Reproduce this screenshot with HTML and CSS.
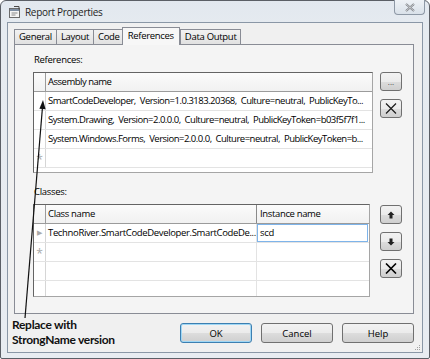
FILE: index.html
```html
<!DOCTYPE html>
<html lang="en">
<head>
    <meta charset="UTF-8">
    <title>Report Properties</title>
    <link rel="stylesheet" href="styles.css">
</head>
<body>
<div class="window">
    <div class="titlebar">
        <svg class="app-icon" width="13" height="12" viewBox="0 0 13 12">
            <rect x="1.5" y="2.5" width="10" height="9" fill="#f4f4f4" stroke="#6b6b6b"/>
            <rect x="2" y="3" width="9" height="2" fill="#7d8ea3"/>
            <path d="M3.5 7h6M3.5 9h4" stroke="#8a8a8a"/>
            <path d="M6 0.5l5 0 0 3" stroke="#4a4a4a" fill="none"/>
        </svg>
        <span class="title">Report Properties</span>
        <button class="close-btn">
            <svg width="10" height="9" viewBox="0 0 10 9">
                <path d="M1 1l8 7M9 1l-8 7" stroke="#7b7f85" stroke-width="2"/>
                <path d="M1 1l8 7M9 1l-8 7" stroke="#fff" stroke-width="0.6"/>
            </svg>
        </button>
    </div>

    <div class="client">
        <div class="tabs">
            <span class="tab">General</span>
            <span class="tab">Layout</span>
            <span class="tab">Code</span>
            <span class="tab active">References</span>
            <span class="tab">Data Output</span>
        </div>

        <div class="panel">
            <div class="group">
                <div class="group-label">References:</div>
                <div class="group-body">
                    <div class="grid refs-grid">
                        <div class="grid-row head">
                            <span class="rowhead"></span>
                            <span class="cell">Assembly name</span>
                        </div>
                        <div class="grid-row">
                            <span class="rowhead"></span>
                            <span class="cell">SmartCodeDeveloper,&nbsp; Version=1.0.3183.20368,&nbsp; Culture=neutral,&nbsp; PublicKeyTo...</span>
                        </div>
                        <div class="grid-row">
                            <span class="rowhead"></span>
                            <span class="cell">System.Drawing,&nbsp; Version=2.0.0.0,&nbsp; Culture=neutral,&nbsp; PublicKeyToken=b03f5f7f1...</span>
                        </div>
                        <div class="grid-row">
                            <span class="rowhead"></span>
                            <span class="cell">System.Windows.Forms,&nbsp; Version=2.0.0.0,&nbsp; Culture=neutral,&nbsp; PublicKeyToken=b...</span>
                        </div>
                        <div class="grid-row">
                            <span class="rowhead new-row">*</span>
                            <span class="cell"></span>
                        </div>
                    </div>
                    <div class="side-buttons">
                        <button class="btn small-btn">...</button>
                        <button class="btn small-btn">
                            <svg width="12" height="11" viewBox="0 0 12 11"><path d="M1 0.5l10 10M11 0.5l-10 10" stroke="#1a1a1a" stroke-width="1.2"/></svg>
                        </button>
                    </div>
                </div>
            </div>

            <div class="group">
                <div class="group-label">Classes:</div>
                <div class="group-body">
                    <div class="grid classes-grid">
                        <div class="grid-row head">
                            <span class="rowhead"></span>
                            <span class="cell class-col">Class name</span>
                            <span class="cell inst-col">Instance name</span>
                        </div>
                        <div class="grid-row">
                            <span class="rowhead current">&#9654;</span>
                            <span class="cell class-col">TechnoRiver.SmartCodeDeveloper.SmartCodeDe...</span>
                            <span class="cell inst-col editing">scd</span>
                        </div>
                        <div class="grid-row">
                            <span class="rowhead new-row">*</span>
                            <span class="cell class-col"></span>
                            <span class="cell inst-col"></span>
                        </div>
                        <div class="grid-row">
                            <span class="rowhead"></span>
                            <span class="cell class-col"></span>
                            <span class="cell inst-col"></span>
                        </div>
                        <div class="grid-row">
                            <span class="rowhead"></span>
                            <span class="cell class-col"></span>
                            <span class="cell inst-col"></span>
                        </div>
                    </div>
                    <div class="side-buttons lower">
                        <button class="btn small-btn">
                            <svg width="8" height="8" viewBox="0 0 8 8"><path d="M4 0.5L7.5 4H5.5V7.5H2.5V4H0.5Z" fill="#222"/></svg>
                        </button>
                        <button class="btn small-btn">
                            <svg width="8" height="8" viewBox="0 0 8 8"><path d="M4 7.5L7.5 4H5.5V0.5H2.5V4H0.5Z" fill="#222"/></svg>
                        </button>
                        <button class="btn small-btn">
                            <svg width="12" height="11" viewBox="0 0 12 11"><path d="M1 0.5l10 10M11 0.5l-10 10" stroke="#000" stroke-width="1.6"/></svg>
                        </button>
                    </div>
                </div>
            </div>
        </div>

        <div class="footer">
            <p class="note">Replace with<br>StrongName version</p>
            <div class="dialog-buttons">
                <button class="btn dlg-btn default">OK</button>
                <button class="btn dlg-btn">Cancel</button>
                <button class="btn dlg-btn">Help</button>
            </div>
        </div>
        <svg class="grip" width="7" height="7" viewBox="0 0 7 7">
            <rect x="5" y="1" width="1" height="1" fill="#a0a0a0"/>
            <rect x="3" y="3" width="1" height="1" fill="#a0a0a0"/>
            <rect x="5" y="3" width="1" height="1" fill="#a0a0a0"/>
            <rect x="1" y="5" width="1" height="1" fill="#a0a0a0"/>
            <rect x="3" y="5" width="1" height="1" fill="#a0a0a0"/>
            <rect x="5" y="5" width="1" height="1" fill="#a0a0a0"/>
        </svg>
    </div>

    <!-- annotation arrow drawn over the dialog -->
    <svg class="callout" width="430" height="359" viewBox="0 0 430 359">
        <line x1="25" y1="318" x2="42.5" y2="107" stroke="#111" stroke-width="1.2"/>
        <path d="M43 100L45.6 109.2 39.4 108.7Z" fill="#111"/>
    </svg>
</div>
</body>
</html>
```

FILE: styles.css
```css
body {
    margin: 0;
    padding: 0;
    background-color: #fff;
    font-family: "Open Sans", "Noto Sans", sans-serif;
    font-size: 9.5px;
    color: #000;
}

.window {
    position: relative;
    box-sizing: border-box;
    width: 430px;
    height: 359px;
    padding: 0 6px 6px 6px;
    border: 1px solid #5b5f66;
    border-radius: 6px 6px 2px 2px;
    background: linear-gradient(#e2e8ef, #e6ebf0 30px, #e8ecf1);
}

.titlebar {
    display: flex;
    align-items: center;
    height: 21px;
    position: relative;
}

.app-icon {
    margin: 0 4px 0 1px;
}

.title {
    font-size: 10px;
    color: #1e1e1e;
    letter-spacing: -0.3px;
}

.close-btn {
    position: absolute;
    top: -1px;
    right: -2px;
    width: 31px;
    height: 15px;
    padding: 0;
    border: 1px solid #8d98a5;
    border-top: none;
    border-radius: 0 0 4px 4px;
    background: linear-gradient(#eef2f6, #d9e1e9);
    display: flex;
    align-items: center;
    justify-content: center;
}

.client {
    position: relative;
    box-sizing: border-box;
    height: 331px;
    border: 1px solid #8a97a6;
    background-color: #f0f0f0;
}

.tabs {
    display: flex;
    align-items: flex-end;
    height: 21px;
    padding-left: 6px;
}

.tab {
    box-sizing: border-box;
    height: 15px;
    line-height: 13px;
    padding: 0 4px;
    margin-right: -1px;
    border: 1px solid #898c95;
    border-bottom: none;
    background: linear-gradient(#f2f2f2, #e1e1e1);
    letter-spacing: -0.3px;
}

.tab.active {
    position: relative;
    z-index: 1;
    height: 18px;
    line-height: 15px;
    margin: 0 -1px -1px -2px;
    padding: 0 5px;
    background-color: #f7f7f7;
    background-image: none;
}

.tab.active + .tab {
    margin-left: 1px;
}

.panel {
    box-sizing: border-box;
    width: 400px;
    height: 270px;
    margin-left: 6px;
    padding: 8px 11px 0 18px;
    border: 1px solid #898c95;
    background-color: #f4f4f4;
}

.group {
    margin-bottom: 12px;
}

.group-label {
    height: 14px;
    line-height: 14px;
    padding-left: 1px;
    margin-bottom: 5px;
    letter-spacing: -0.3px;
}

.group-body {
    display: flex;
    justify-content: space-between;
    align-items: flex-start;
}

.grid {
    box-sizing: border-box;
    border: 1px solid #a5a5a5;
    border-top-color: #646464;
    border-left-color: #646464;
    background-color: #fff;
    overflow: hidden;
}

.refs-grid {
    width: 340px;
    height: 101px;
}

.classes-grid {
    width: 337px;
    height: 93px;
}

.grid-row {
    display: flex;
    height: 18px;
    border-bottom: 1px solid #e3e3e3;
}

.grid-row.head {
    height: 18px;
    border-bottom: 1px solid #9b9b9b;
    background: linear-gradient(#fbfbfb, #f1f1f1);
}

.rowhead {
    flex: none;
    width: 11px;
    border-right: 1px solid #d6d6d6;
    color: #a8a8a8;
    text-align: center;
    line-height: 18px;
}

.head .rowhead {
    border-right-color: #9b9b9b;
}

.rowhead.new-row {
    font-size: 12px;
    line-height: 22px;
}

.rowhead.current {
    font-size: 7px;
}

.cell {
    flex: 1;
    padding-left: 2px;
    line-height: 18px;
    white-space: nowrap;
    overflow: hidden;
    letter-spacing: -0.35px;
}

.refs-grid .cell {
    letter-spacing: -0.5px;
}

.class-col {
    flex: none;
    width: 208px;
    border-right: 1px solid #e3e3e3;
}

.head .class-col {
    border-right-color: #8a8a8a;
}

.inst-col {
    padding-left: 3px;
}

.cell.editing {
    box-sizing: border-box;
    height: 18px;
    line-height: 15px;
    border: 1px solid #7eb4ea;
    padding-left: 2px;
    margin-right: 1px;
}

.side-buttons {
    display: flex;
    flex-direction: column;
    gap: 8px;
}

.side-buttons.lower {
    margin-top: 1px;
}

.btn {
    box-sizing: border-box;
    padding: 0;
    border: 1px solid #707070;
    border-radius: 3px;
    background: linear-gradient(#f2f2f2 0%, #ebebeb 50%, #dddddd 51%, #cfcfcf 100%);
    font-family: inherit;
    font-size: 9.5px;
    color: #000;
    display: flex;
    align-items: center;
    justify-content: center;
}

.small-btn {
    width: 22px;
    height: 19px;
    color: #444;
    font-size: 8px;
    line-height: 8px;
}

.footer {
    display: flex;
    justify-content: space-between;
    align-items: flex-start;
    padding: 0 8px 0 4px;
}

.note {
    margin: 3px 0 0 0;
    font-family: "Lato", "Open Sans", sans-serif;
    font-weight: bold;
    font-size: 12px;
    letter-spacing: -0.3px;
    line-height: 15px;
    color: #111;
}

.dialog-buttons {
    display: flex;
    gap: 9px;
    margin-top: 9px;
}

.dlg-btn {
    width: 72px;
    height: 20px;
}

.dlg-btn.default {
    border-color: #3c7fb1;
    box-shadow: inset 0 0 0 1px #9fd7f5;
}

.grip {
    position: absolute;
    right: 1px;
    bottom: 1px;
}

.callout {
    position: absolute;
    top: -1px;
    left: -1px;
    pointer-events: none;
}
```
